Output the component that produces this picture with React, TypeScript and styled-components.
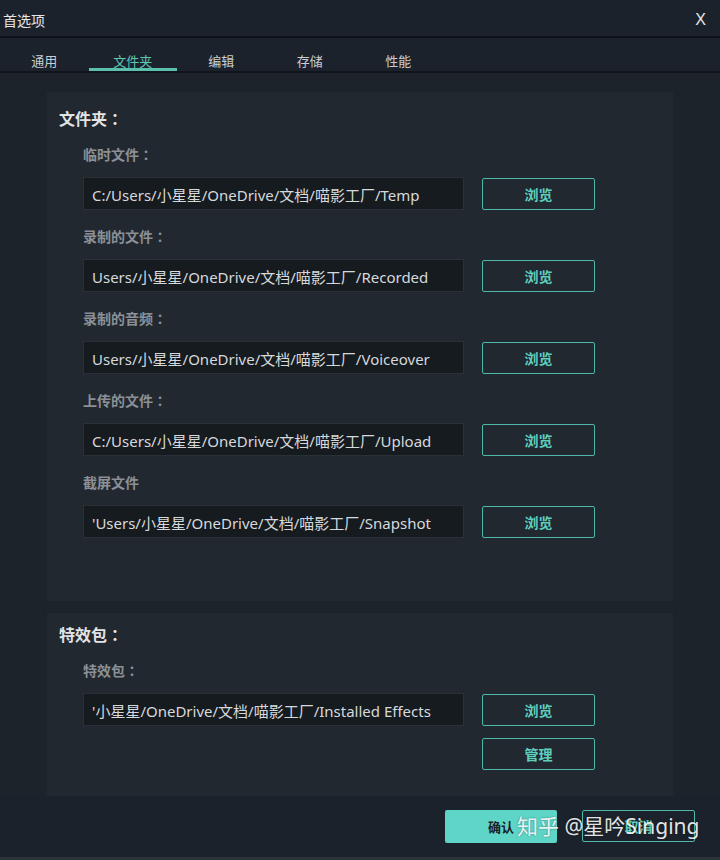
import React, { useState } from "react";
import styled, { createGlobalStyle } from "styled-components";

const GlobalStyle = createGlobalStyle`
  html, body {
    margin: 0;
    padding: 0;
    background: #1c222b;
  }
  body {
    font-family: "Noto Sans", "Noto Sans CJK SC", sans-serif;
  }
`;

const tabs = ["通用", "文件夹", "编辑", "存储", "性能"];

const folders = [
  { label: "临时文件", colon: true, path: "C:/Users/小星星/OneDrive/文档/喵影工厂/Temp" },
  { label: "录制的文件", colon: true, path: "Users/小星星/OneDrive/文档/喵影工厂/Recorded" },
  { label: "录制的音频", colon: true, path: "Users/小星星/OneDrive/文档/喵影工厂/Voiceover" },
  { label: "上传的文件", colon: true, path: "C:/Users/小星星/OneDrive/文档/喵影工厂/Upload" },
  { label: "截屏文件", colon: false, path: "'Users/小星星/OneDrive/文档/喵影工厂/Snapshot" },
];

export default function App() {
  const [active, setActive] = useState(1);

  return (
    <>
      <GlobalStyle />
      <Window>
        <TitleBar>
          <Title>首选项</Title>
          <Close>X</Close>
        </TitleBar>
        <TabBar>
          {tabs.map((t, i) => (
            <Tab key={t} $active={i === active} onClick={() => setActive(i)}>
              {t}
            </Tab>
          ))}
        </TabBar>
        <Content>
          <Panel $bottom={63}>
            <SectionTitle>
              文件夹<Colon>：</Colon>
            </SectionTitle>
            {folders.map((f) => (
              <Field key={f.label}>
                <FieldLabel>
                  {f.label}
                  {f.colon && <Colon>：</Colon>}
                </FieldLabel>
                <Row>
                  <PathBox>{f.path}</PathBox>
                  <ButtonColumn>
                    <OutlineButton>浏览</OutlineButton>
                  </ButtonColumn>
                </Row>
              </Field>
            ))}
          </Panel>
          <Panel $bottom={26} $top={10}>
            <SectionTitle>
              特效包<Colon>：</Colon>
            </SectionTitle>
            <Field>
              <FieldLabel>
                特效包<Colon>：</Colon>
              </FieldLabel>
              <Row>
                <PathBox>'小星星/OneDrive/文档/喵影工厂/Installed Effects</PathBox>
                <ButtonColumn>
                  <OutlineButton>浏览</OutlineButton>
                  <OutlineButton>管理</OutlineButton>
                </ButtonColumn>
              </Row>
            </Field>
          </Panel>
        </Content>
        <Footer>
          <FilledButton>确认</FilledButton>
          <OutlineButton>取消</OutlineButton>
          <Watermark>知乎 @星吟Singing</Watermark>
        </Footer>
      </Window>
    </>
  );
}

const Window = styled.div`
  width: 720px;
  height: 860px;
  display: flex;
  flex-direction: column;
  background: #1c222b;
  border-bottom: 3px solid #2b323a;
  box-sizing: border-box;
  overflow: hidden;
`;

const TitleBar = styled.div`
  height: 38px;
  flex-shrink: 0;
  display: flex;
  align-items: center;
  justify-content: space-between;
  padding: 3px 14px 0 3px;
  box-sizing: border-box;
  border-bottom: 2px solid #0c1116;
`;

const Title = styled.span`
  color: #e4e6e8;
  font-size: 14px;
`;

const Close = styled.span`
  color: #e8e8e8;
  font-family: "Liberation Sans", sans-serif;
  font-size: 16px;
`;

const TabBar = styled.div`
  height: 33px;
  flex-shrink: 0;
  display: flex;
  border-bottom: 2px solid #10151b;
`;

const Tab = styled.div<{ $active: boolean }>`
  width: 88.5px;
  display: flex;
  align-items: center;
  justify-content: center;
  font-family: "Noto Sans CJK SC", sans-serif;
  font-size: 13px;
  color: ${(p) => (p.$active ? "#5fc8b6" : "#c9cdd1")};
  border-bottom: 3px solid ${(p) => (p.$active ? "#5bbfae" : "transparent")};
  box-sizing: border-box;
  padding-top: 14px;
  cursor: pointer;
`;

const Content = styled.div`
  flex: 1;
  padding: 19px 47px 0 47px;
  display: flex;
  flex-direction: column;
  gap: 12px;
  background: #1d232b;
`;

const Panel = styled.section<{ $bottom: number; $top?: number }>`
  background: #22282f;
  padding: ${(p) => p.$top ?? 15}px 0 ${(p) => p.$bottom}px 12px;
  display: flex;
  flex-direction: column;
`;

const Colon = styled.span`
  font-family: "Noto Sans CJK TC", sans-serif;
`;

const SectionTitle = styled.h2`
  margin: 0;
  height: 22px;
  line-height: 22px;
  font-family: "Noto Sans CJK SC", sans-serif;
  font-size: 16px;
  font-weight: 700;
  color: #e2e4e6;
`;

const Field = styled.div`
  padding-left: 24px;
  display: flex;
  flex-direction: column;
  margin-top: 14px;

  & + & {
    margin-top: 15px;
  }
`;

const FieldLabel = styled.div`
  height: 22px;
  line-height: 22px;
  font-family: "Noto Sans CJK SC", sans-serif;
  font-size: 14px;
  font-weight: 700;
  color: #8b9096;
  margin-bottom: 12px;
`;

const Row = styled.div`
  display: flex;
  align-items: flex-start;
  gap: 18px;
`;

const PathBox = styled.div`
  width: 381px;
  height: 33px;
  box-sizing: border-box;
  background: #161b20;
  border: 1px solid #2a3037;
  color: #d6d9dc;
  font-size: 15px;
  line-height: 31px;
  padding: 2px 0 0 8px;
  white-space: nowrap;
  overflow: hidden;
`;

const ButtonColumn = styled.div`
  display: flex;
  flex-direction: column;
  gap: 12px;
  padding-top: 1px;
`;

const OutlineButton = styled.button`
  width: 113px;
  height: 32px;
  box-sizing: border-box;
  background: transparent;
  border: 1.5px solid #4fb9a9;
  border-radius: 2px;
  color: #5fcfbd;
  font-family: "Noto Sans CJK SC", sans-serif;
  font-size: 14px;
  font-weight: 700;
  cursor: pointer;
`;

const Footer = styled.div`
  position: relative;
  height: 61px;
  flex-shrink: 0;
  display: flex;
  justify-content: flex-end;
  align-items: flex-start;
  gap: 25px;
  padding: 14px 25px 0 0;
  box-sizing: border-box;
`;

const FilledButton = styled.button`
  width: 112px;
  height: 33px;
  border: none;
  border-radius: 2px;
  background: #5ed5c6;
  color: #1a2028;
  font-family: "Noto Sans CJK SC", sans-serif;
  font-size: 13px;
  font-weight: 700;
  cursor: pointer;
`;

const Watermark = styled.span`
  position: absolute;
  left: 517px;
  top: 14px;
  font-family: "Noto Sans", "Noto Sans CJK SC", sans-serif;
  font-size: 21px;
  color: rgba(255, 255, 255, 0.9);
  white-space: nowrap;
  pointer-events: none;
  text-shadow: 0 0 2px rgba(0, 0, 0, 0.4);
`;
